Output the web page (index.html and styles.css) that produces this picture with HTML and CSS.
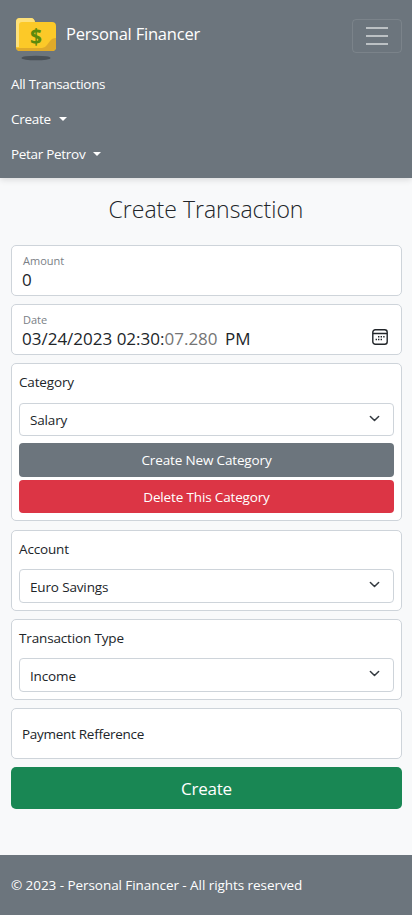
FILE: index.html
```html
<!DOCTYPE html>
<html lang="en">
<head>
    <meta charset="UTF-8">
    <meta name="viewport" content="width=device-width, initial-scale=1.0">
    <title>Personal Financer</title>
    <link rel="stylesheet" href="styles.css">
</head>
<body>

    <header class="navbar">
        <div class="navbar-top">
            <a class="brand" href="#">
                <svg class="brand-logo" width="40" height="44" viewBox="0 0 40 44">
                    <ellipse cx="20" cy="41" rx="14.500" ry="2.300" fill="#4a5158"/>
                    <path d="M0 5q0-4 4-4h11q3 0 4 4h17q4 0 4 4v21q0 4-4 4H4q-4 0-4-4z" fill="#fcc928"/>
                    <path d="M0 30V5q0-4 4-4h11q3 0 4 4H6q-3 0-3 3v22z" fill="#fde07a"/>
                    <path d="M40 21v9q0 4-4 4H4q-3 0-4-3h26q3 0 5-3l3-4q2-3 6-3z" fill="#e0aa2a"/>
                    <text class="brand-dollar" x="20" y="26.500" text-anchor="middle">$</text>
                </svg>
                <span>Personal Financer</span>
            </a>
            <button class="toggler" aria-label="Menu">
                <span></span><span></span><span></span>
            </button>
        </div>
        <nav class="nav-links">
            <a href="#">All Transactions</a>
            <a href="#" class="dropdown">Create</a>
            <a href="#" class="dropdown">Petar Petrov</a>
        </nav>
    </header>

    <main class="content">
        <h1>Create Transaction</h1>

        <form class="form">
            <div class="box floating">
                <label>Amount</label>
                <div class="value">0</div>
            </div>

            <div class="box floating">
                <label>Date</label>
                <div class="value date-value">
                    <span>03/24/2023 02:30:<span class="muted">07.280</span> <span class="ampm">PM</span></span>
                    <svg width="16" height="16" viewBox="0 0 16 16" fill="none" stroke="#212529">
                        <rect x="0.800" y="0.800" width="14.400" height="14.400" rx="2.500" stroke-width="1.400"/>
                        <path d="M1 4.500h14" stroke-width="1.500"/>
                        <path d="M6 7.800h1.400M8.600 7.800h1.400M11.200 7.800h1.400M3.600 10.400h1.400M6 10.400h1.400M8.600 10.400h1.400" stroke-width="1.500"/>
                    </svg>
                </div>
            </div>

            <div class="box group group-category">
                <label>Category</label>
                <div class="select">Salary</div>
                <a href="#" class="btn btn-grey">Create New Category</a>
                <a href="#" class="btn btn-red">Delete This Category</a>
            </div>

            <div class="box group">
                <label>Account</label>
                <div class="select">Euro Savings</div>
            </div>

            <div class="box group">
                <label>Transaction Type</label>
                <div class="select">Income</div>
            </div>

            <div class="box reference">Payment Refference</div>

            <button type="button" class="btn-create">Create</button>
        </form>
    </main>

    <footer class="footer">&copy; 2023 - Personal Financer - All rights reserved</footer>

</body>
</html>
```

FILE: styles.css
```css
* {
    box-sizing: border-box;
}

body {
    margin: 0;
    min-height: 915px;
    display: flex;
    flex-direction: column;
    font-family: "Open Sans", "Noto Sans", Arial, sans-serif;
    font-size: 13.500px;
    letter-spacing: -0.15px;
    color: #212529;
    background-color: #f8f9fa;
}

a {
    text-decoration: none;
    color: inherit;
}

/* navbar */
.navbar {
    height: 178px;
    background-color: #6c757d;
    color: #fff;
    box-shadow: 0 2px 6px rgba(0, 0, 0, 0.12);
}

.navbar-top {
    height: 67px;
    padding: 17px 10px 0 16px;
    display: flex;
    justify-content: space-between;
    align-items: flex-start;
}

.brand {
    display: flex;
    align-items: flex-start;
    gap: 10px;
    font-size: 16.500px;
    letter-spacing: -0.2px;
}

.brand span {
    margin-top: 5px;
}

.brand-dollar {
    font-family: "Open Sans", sans-serif;
    font-size: 21px;
    font-weight: 700;
    fill: #5c8a0c;
}

.toggler {
    width: 50px;
    height: 34px;
    margin-top: 2px;
    padding: 0 13px;
    display: flex;
    flex-direction: column;
    justify-content: center;
    gap: 6px;
    background: none;
    border: 1px solid rgba(255, 255, 255, 0.1);
    border-radius: 4px;
}

.toggler span {
    height: 2px;
    background-color: rgba(255, 255, 255, 0.55);
}

.nav-links {
    display: flex;
    flex-direction: column;
    padding-left: 11px;
    letter-spacing: -0.3px;
}

.nav-links a {
    height: 35px;
    line-height: 35px;
}

.dropdown::after {
    content: "";
    display: inline-block;
    margin-left: 8px;
    vertical-align: 3px;
    border-top: 4px solid #fff;
    border-left: 4px solid transparent;
    border-right: 4px solid transparent;
}

/* page */
.content {
    flex: 1;
    padding: 0 10px 0 11px;
}

h1 {
    margin: 0;
    height: 67.200px;
    padding-right: 1px;
    line-height: 62px;
    text-align: center;
    font-size: 23px;
    font-weight: 300;
    letter-spacing: 0;
}

.form {
    display: flex;
    flex-direction: column;
    gap: 8.800px;
}

.box {
    background-color: #fff;
    border: 1px solid #ced4da;
    border-radius: 5px;
}

.floating {
    height: 50.500px;
    margin-bottom: -0.300px;
    padding: 7px 10px 0;
}

.floating label {
    display: block;
    padding-left: 1px;
    font-size: 11px;
    line-height: 16px;
    letter-spacing: 0;
    color: #7a8086;
}

.value {
    font-size: 17px;
    line-height: 21px;
    letter-spacing: 0;
}

.date-value {
    display: flex;
    justify-content: space-between;
    align-items: center;
    padding-right: 3px;
}

.date-value svg {
    margin-top: -3px;
}

.muted {
    color: #757575;
}

.ampm {
    margin-left: 3px;
}

.group {
    padding: 7px;
    display: flex;
    flex-direction: column;
}

.group label {
    height: 31px;
    line-height: 23px;
}

.group-category label {
    height: 32px;
}

.select {
    height: 33.300px;
    line-height: 34px;
    padding-left: 10px;
    background: #fff url("data:image/svg+xml,%3csvg xmlns='http://www.w3.org/2000/svg' viewBox='0 0 16 16'%3e%3cpath fill='none' stroke='%23343a40' stroke-linecap='round' stroke-linejoin='round' stroke-width='2.200' d='m2 5 6 6 6-6'/%3e%3c/svg%3e") no-repeat right 13px top 8.500px / 11.200px 11.200px;
    border: 1px solid #ced4da;
    border-radius: 4px;
}

.group-category .select {
    line-height: 32.500px;
}

.btn {
    height: 33.500px;
    line-height: 35.500px;
    text-align: center;
    color: #fff;
    border-radius: 4px;
}

.btn-grey {
    margin-top: 7px;
    background-color: #6c757d;
}

.btn-red {
    margin-top: 3px;
    background-color: #dc3545;
}

.reference {
    height: 50.200px;
    line-height: 50.500px;
    padding-left: 10px;
    letter-spacing: -0.28px;
}

.btn-create {
    height: 42px;
    font-family: inherit;
    font-size: 17px;
    letter-spacing: -0.25px;
    color: #fff;
    background-color: #198754;
    border: none;
    border-radius: 5px;
}

/* footer */
.footer {
    height: 60px;
    line-height: 60px;
    padding-left: 11px;
    letter-spacing: -0.06px;
    color: #fff;
    background-color: #6c757d;
}
```
